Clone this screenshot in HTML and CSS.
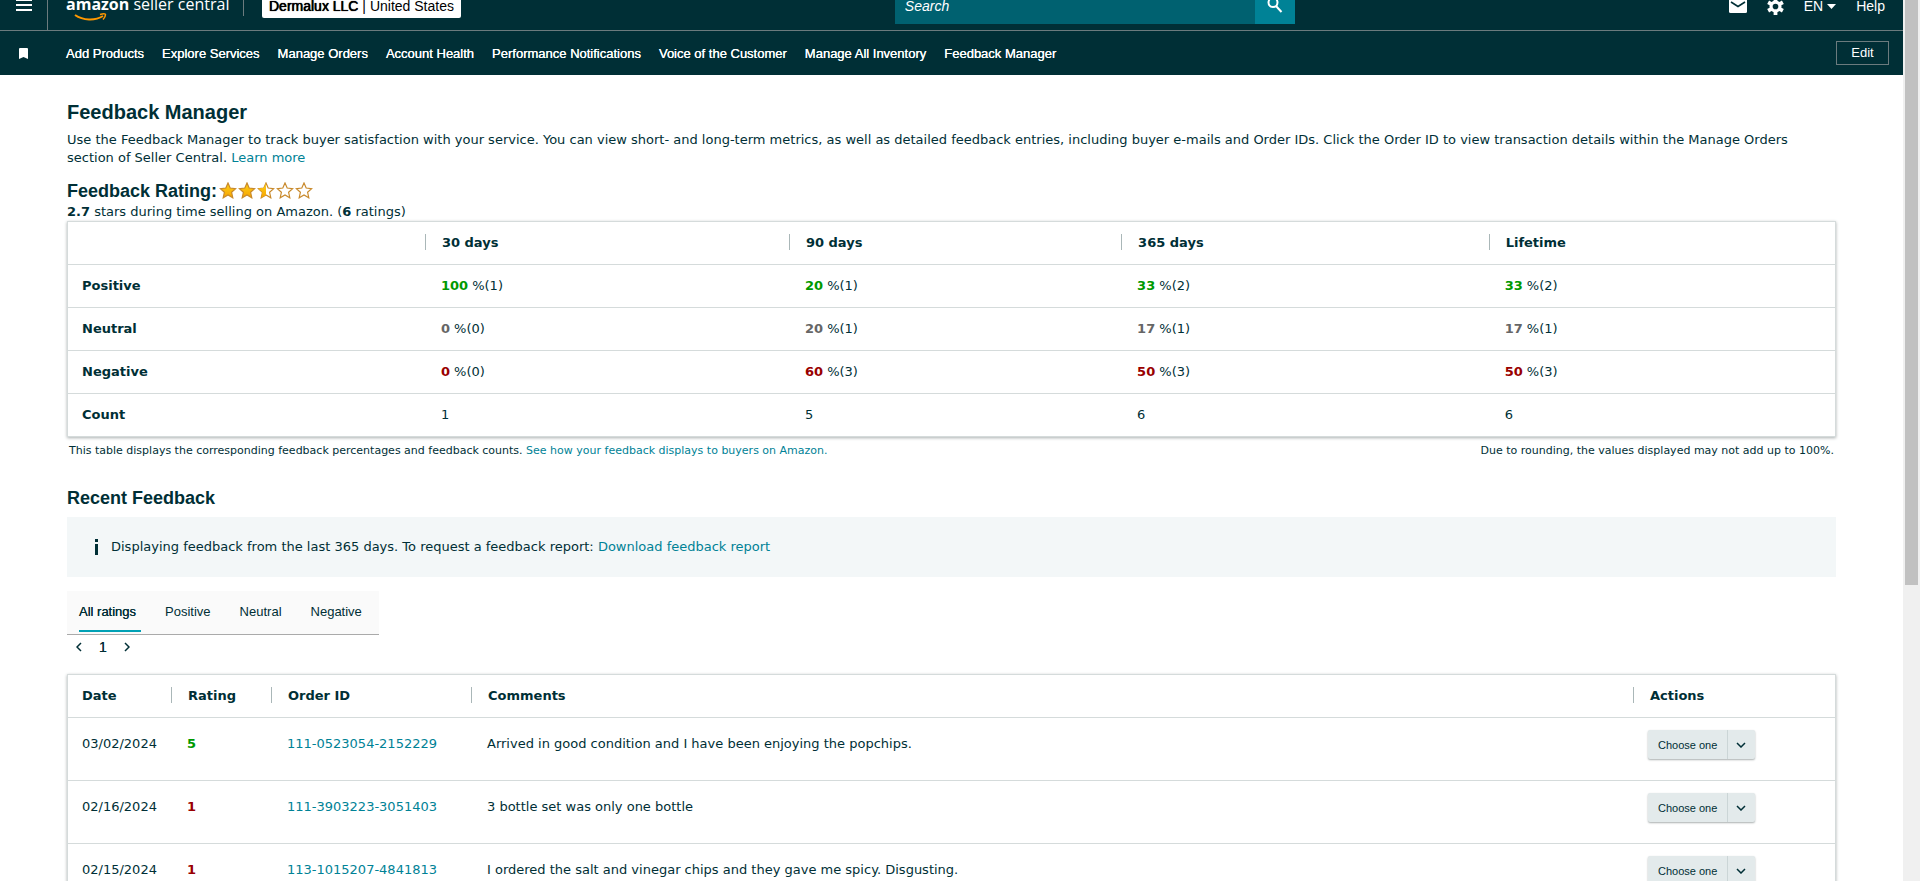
FILE: index.html
```html
<!DOCTYPE html>
<html lang="en">
<head>
    <meta charset="UTF-8">
    <meta name="viewport" content="width=device-width, initial-scale=1.0">
    <title>Feedback Manager</title>
    <link rel="stylesheet" href="styles.css">
</head>
<body>
    <div class="page">
        <header class="header">
            <div class="topbar">
                <button class="menu-btn" aria-label="Menu">
                    <svg width="16" height="12" viewBox="0 0 16 12"><path d="M0 1h16M0 6h16M0 11h16" stroke="#fff" stroke-width="2"/></svg>
                </button>
                <a class="logo" href="#" aria-label="amazon seller central">
                    <span class="logo-text"><b>amazon</b> seller central</span>
                    <svg class="smile" width="34" height="8" viewBox="0 0 34 8" fill="none" stroke="#f90"><path d="M1 2c8 5.500 20 6 28 1" stroke-width="2"/><path d="M26 1.500c3-1 5.500-1 5.500 0s-1 3.500-2.500 5" stroke-width="1.500"/></svg>
                </a>
                <span class="divider"></span>
                <button class="account"><span class="strong">Dermalux LLC</span> | United States</button>
                <form class="search">
                    <input type="text" placeholder="Search" aria-label="Search">
                    <button type="button" aria-label="Search">
                        <svg width="16" height="18" viewBox="0 0 16 18" fill="none" stroke="#fff" stroke-width="2"><circle cx="6" cy="6.500" r="4.500"/><path d="M9 10l5.500 6"/></svg>
                    </button>
                </form>
                <div class="tools">
                    <a href="#" aria-label="Messages">
                        <svg width="18" height="14" viewBox="0 0 18 14"><rect width="18" height="14" rx="1.500" fill="#fff"/><path d="M2 3l7 4.500L16 3" fill="none" stroke="#002f36" stroke-width="1.600"/></svg>
                    </a>
                    <a href="#" aria-label="Settings">
                        <svg width="17" height="17" viewBox="0 0 18 18"><g fill="none" stroke="#fff"><circle cx="9" cy="9" r="4.700" stroke-width="3.400"/><path d="M9 0v4M9 14v4M1.200 4.500l3.500 2M13.300 11.500l3.500 2M1.200 13.500l3.500-2M13.300 6.500l3.500-2" stroke-width="4"/></g></svg>
                    </a>
                    <button class="lang">EN <svg width="9" height="5" viewBox="0 0 9 5"><path d="M0 0h9L4.500 5z" fill="#fff"/></svg></button>
                    <a href="#">Help</a>
                </div>
            </div>
            <nav class="favorites">
                <svg class="bookmark" width="9" height="11" viewBox="0 0 9 11"><path d="M0 1q0-1 1-1h7q1 0 1 1v10L4.500 9 0 11z" fill="#fff"/></svg>
                <a href="#">Add Products</a>
                <a href="#">Explore Services</a>
                <a href="#">Manage Orders</a>
                <a href="#">Account Health</a>
                <a href="#">Performance Notifications</a>
                <a href="#">Voice of the Customer</a>
                <a href="#">Manage All Inventory</a>
                <a href="#">Feedback Manager</a>
                <button class="edit-btn">Edit</button>
            </nav>
        </header>

        <main class="content">
            <h1>Feedback Manager</h1>
            <p class="intro">Use the Feedback Manager to track buyer satisfaction with your service. You can view short- and long-term metrics, as well as detailed feedback entries, including buyer e-mails and Order IDs. Click the Order ID to view transaction details within the Manage Orders section of Seller Central. <a href="#">Learn more</a></p>

            <div class="rating-head">
                <h2>Feedback Rating:</h2>
                <svg class="stars" width="94" height="18" viewBox="0 0 94 18" role="img" aria-label="2.7 out of 5 stars">
                    <defs>
                        <linearGradient id="gold" x1="0" y1="0" x2="0" y2="1"><stop offset="0" stop-color="#ffd21a"/><stop offset="1" stop-color="#f5a300"/></linearGradient>
                        <path id="star" d="M9 1l2.200 5 5.400.6-4 3.700 1.200 5.400L9 13l-4.800 2.700 1.200-5.400-4-3.700L6.800 6z"/>
                        <path id="half" d="M9 1v12l-4.800 2.700 1.200-5.400-4-3.700L6.800 6z"/>
                    </defs>
                    <g stroke="#c8892b" stroke-width="1.200">
                        <use href="#star" fill="url(#gold)"/>
                        <use href="#star" x="19" fill="url(#gold)"/>
                        <use href="#star" x="38" fill="#fff"/>
                        <use href="#half" x="38" fill="url(#gold)" stroke="none"/>
                        <use href="#star" x="57" fill="#fff"/>
                        <use href="#star" x="76" fill="#fff"/>
                    </g>
                </svg>
            </div>
            <p class="summary"><b>2.7</b> stars during time selling on Amazon. (<b>6</b> ratings)</p>

            <table class="grid metrics">
                <thead>
                    <tr><th></th><th>30 days</th><th>90 days</th><th>365 days</th><th>Lifetime</th></tr>
                </thead>
                <tbody>
                    <tr><th>Positive</th><td><b class="pos">100</b> %(1)</td><td><b class="pos">20</b> %(1)</td><td><b class="pos">33</b> %(2)</td><td><b class="pos">33</b> %(2)</td></tr>
                    <tr><th>Neutral</th><td><b class="neu">0</b> %(0)</td><td><b class="neu">20</b> %(1)</td><td><b class="neu">17</b> %(1)</td><td><b class="neu">17</b> %(1)</td></tr>
                    <tr><th>Negative</th><td><b class="neg">0</b> %(0)</td><td><b class="neg">60</b> %(3)</td><td><b class="neg">50</b> %(3)</td><td><b class="neg">50</b> %(3)</td></tr>
                    <tr><th>Count</th><td>1</td><td>5</td><td>6</td><td>6</td></tr>
                </tbody>
            </table>
            <div class="notes">
                <span>This table displays the corresponding feedback percentages and feedback counts. <a href="#">See how your feedback displays to buyers on Amazon.</a></span>
                <span>Due to rounding, the values displayed may not add up to 100%.</span>
            </div>

            <h2>Recent Feedback</h2>
            <div class="info">
                <svg width="5" height="16" viewBox="0 0 5 16"><path d="M1 0h3v3H1zM1 5h3v11H1z" fill="#002f36"/></svg>
                <span>Displaying feedback from the last 365 days. To request a feedback report: <a href="#">Download feedback report</a></span>
            </div>

            <div class="tabs">
                <button class="active">All ratings</button>
                <button>Positive</button>
                <button>Neutral</button>
                <button>Negative</button>
            </div>
            <div class="pager">
                <button aria-label="Previous page"><svg width="6" height="10" viewBox="0 0 6 10"><path d="M5 1L1 5l4 4"/></svg></button>
                <span>1</span>
                <button aria-label="Next page"><svg width="6" height="10" viewBox="0 0 6 10"><path d="M1 1l4 4-4 4"/></svg></button>
            </div>

            <table class="grid feedback">
                <thead>
                    <tr><th class="col-date">Date</th><th class="col-rating">Rating</th><th class="col-order">Order ID</th><th>Comments</th><th class="col-actions">Actions</th></tr>
                </thead>
                <tbody>
                    <tr>
                        <td>03/02/2024</td><td><b class="pos">5</b></td><td><a href="#">111-0523054-2152229</a></td>
                        <td>Arrived in good condition and I have been enjoying the popchips.</td>
                        <td><div class="choose"><select aria-label="Action"><option>Choose one</option></select><svg width="10" height="6" viewBox="0 0 10 6"><path d="M1 1l4 4 4-4"/></svg></div></td>
                    </tr>
                    <tr>
                        <td>02/16/2024</td><td><b class="neg">1</b></td><td><a href="#">111-3903223-3051403</a></td>
                        <td>3 bottle set was only one bottle</td>
                        <td><div class="choose"><select aria-label="Action"><option>Choose one</option></select><svg width="10" height="6" viewBox="0 0 10 6"><path d="M1 1l4 4 4-4"/></svg></div></td>
                    </tr>
                    <tr>
                        <td>02/15/2024</td><td><b class="neg">1</b></td><td><a href="#">113-1015207-4841813</a></td>
                        <td>I ordered the salt and vinegar chips and they gave me spicy. Disgusting.</td>
                        <td><div class="choose"><select aria-label="Action"><option>Choose one</option></select><svg width="10" height="6" viewBox="0 0 10 6"><path d="M1 1l4 4 4-4"/></svg></div></td>
                    </tr>
                </tbody>
            </table>
        </main>
    </div>
    <div class="scrollbar"><div class="thumb"></div></div>
</body>
</html>
```
FILE: styles.css
```css
* {
    box-sizing: border-box;
}
body {
    margin: 0;
    display: flex;
    height: 100vh;
    overflow: hidden;
    background: #fff;
    color: #002f36;
    font-family: Verdana, "DejaVu Sans", sans-serif;
    font-size: 13px;
    line-height: 18px;
}
a {
    color: #008296;
    text-decoration: none;
}
button, input, select {
    margin: 0;
    padding: 0;
    border: 0;
    background: none;
    color: inherit;
    font-family: Arial, "Liberation Sans", sans-serif;
    font-size: 13px;
}
h1, h2 {
    margin: 0;
    font-family: Arial, "Liberation Sans", sans-serif;
    line-height: 24px;
}
h1 {
    font-size: 20px;
}
h2 {
    font-size: 18px;
}
p {
    margin: 0;
}
.page {
    flex: 1;
    min-width: 0;
}

/* header, scrolled a little out of view */
.header {
    margin-top: -18px;
    background: #002f36;
    color: #fff;
    font-family: Arial, "Liberation Sans", sans-serif;
}
.header a {
    color: #fff;
}
.topbar {
    display: flex;
    align-items: center;
    height: 49px;
    border-bottom: 1px solid #6b7b7e;
}
.menu-btn {
    width: 48px;
    height: 48px;
    padding: 0 8px;
    border-right: 1px solid #6b7b7e;
}
.logo {
    display: flex;
    flex-direction: column;
    width: 160px;
    margin-left: 18px;
    padding-top: 4px;
}
.logo-text {
    font-family: "Open Sans", sans-serif;
    font-size: 16px;
    line-height: 18px;
    white-space: nowrap;
}
.smile {
    margin-left: 8px;
}
.divider {
    width: 1px;
    height: 20px;
    margin: 0 18px 0 17px;
    background: #6b7b7e;
}
.account {
    height: 24px;
    padding: 0 7px;
    border-radius: 2px;
    background: #fff;
    color: #000;
    font-size: 14px;
    white-space: nowrap;
}
.strong {
    text-shadow: 0 0 currentColor, 0 0 1px currentColor;
}
.search {
    display: flex;
    width: 400px;
    height: 36px;
    margin-left: auto;
}
.search input {
    flex: 1;
    padding: 0 10px;
    background: #006170;
    color: #fff;
    font-size: 14px;
    font-style: italic;
}
.search input::placeholder {
    color: #fff;
}
.search button {
    width: 40px;
    background: #008296;
}
.tools {
    display: flex;
    align-items: center;
    gap: 20px;
    margin-left: auto;
    padding-right: 18px;
    font-size: 14px;
}
.tools a, .lang {
    display: flex;
    align-items: center;
}
.lang {
    gap: 4px;
    font-size: 14px;
}
.favorites {
    display: flex;
    align-items: center;
    gap: 18px;
    height: 44px;
    padding: 0 14px 0 19px;
    text-shadow: 0 0 currentColor;
    white-space: nowrap;
}
.favorites a {
    padding-top: 2px;
}
.bookmark {
    margin-right: 20px;
}
.edit-btn {
    width: 53px;
    height: 24px;
    margin-left: auto;
    padding-bottom: 2px;
    border: 1px solid #6b7b7e;
}

.content {
    padding: 25px 67px 0;
}
.intro {
    padding: 7px 0 12px;
}
.rating-head {
    display: flex;
    align-items: center;
    gap: 2px;
}

.grid {
    width: 100%;
    border: 1px solid #d5dbdb;
    border-collapse: separate;
    border-spacing: 0;
    table-layout: fixed;
    box-shadow: 0 1px 3px #aab0b0;
}
.grid th, .grid td {
    position: relative;
    height: 43px;
    padding: 12px 0 12px 17px;
    border-bottom: 1px solid #d5dbdb;
    text-align: left;
    vertical-align: top;
}
.grid td {
    padding-left: 16px;
}
.grid tr > :first-child {
    padding-left: 14px;
}
.grid tbody tr:last-child > * {
    height: 42px;
    border-bottom: 0;
}
.grid thead th + th::before {
    content: "";
    position: absolute;
    top: 12px;
    left: 0;
    width: 1px;
    height: 16px;
    background: #aab7b8;
}
.metrics thead th:nth-child(1) {
    width: 20.2%;
}
.metrics thead th:nth-child(2) {
    width: 20.6%;
}
.metrics thead th:nth-child(3) {
    width: 18.8%;
}
.metrics thead th:nth-child(4) {
    width: 20.8%;
}
.pos {
    color: #090;
}
.neu {
    color: #666;
}
.neg {
    color: #900;
}
.notes {
    display: flex;
    justify-content: space-between;
    padding: 5px 2px 26px;
    font-size: 11px;
}
.info {
    display: flex;
    align-items: center;
    gap: 12px;
    height: 60px;
    margin: 7px 0 14px;
    padding: 0 27px;
    background: #f3f7f8;
}

.tabs {
    display: inline-flex;
    gap: 24px;
    height: 44px;
    padding: 0 12px 2px;
    border-bottom: 1px solid #aaa;
    background: #fafafa;
    vertical-align: top;
}
.tabs button {
    padding: 0 5px 0 0;
    border-top: 2px solid transparent;
    border-bottom: 2px solid transparent;
}
.tabs .active {
    border-bottom-color: #00a1b5;
    text-shadow: 0 0 currentColor;
}
.pager {
    display: flex;
    align-items: center;
    gap: 17px;
    height: 24px;
    margin-bottom: 15px;
    padding-left: 9px;
    font-family: Arial, "Liberation Sans", sans-serif;
    font-size: 14px;
    text-shadow: 0 0 currentColor;
}
.pager button {
    display: flex;
}
.pager svg, .choose svg {
    fill: none;
    stroke: #002f36;
    stroke-width: 1.5;
}
.feedback .col-date {
    width: 103px;
}
.feedback .col-rating {
    width: 100px;
}
.feedback .col-order {
    width: 200px;
}
.feedback .col-actions {
    width: 202px;
}
.grid.feedback tbody td {
    height: 63px;
    padding-top: 17px;
}
.grid.feedback tbody td:last-child {
    padding: 12px 0 0 15px;
}
.choose {
    display: flex;
    align-items: center;
    position: relative;
    width: 107px;
    height: 29px;
    border-radius: 2px;
    background: linear-gradient(#cbd5d6, #cbd5d6) 79px 0 / 1px 100% no-repeat #e3eaeb;
    box-shadow: 0 1px 2px #aab0b0;
}
.choose select {
    width: 100%;
    height: 100%;
    padding: 0 30px 0 10px;
    appearance: none;
    font-size: 11px;
}
.choose svg {
    position: absolute;
    right: 9px;
    pointer-events: none;
}

.scrollbar {
    width: 17px;
    padding: 0 2px;
    background: #f0f0f0;
}
.thumb {
    height: 585px;
    background: #c1c1c1;
}
```
